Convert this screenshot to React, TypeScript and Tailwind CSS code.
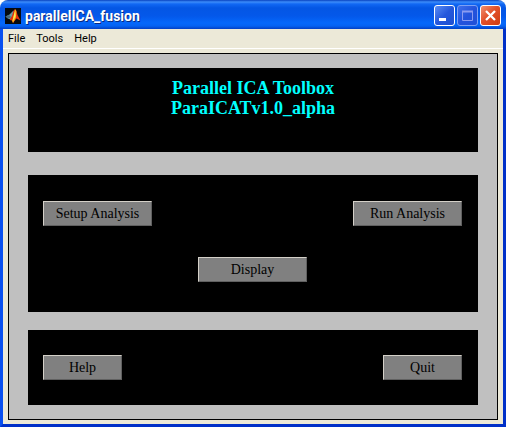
import type { ReactNode } from 'react';

function MatlabIcon() {
  return (
    <svg viewBox="0 0 16 16" className="size-4 shrink-0" aria-hidden="true">
      <rect width="16" height="16" fill="#050a10" />
      <path d="M0.500 8.500 L4.500 6.500 L8.500 2.500 L9 4 L8 8 L5.500 11 L3.500 11 Z" fill="#6b9aa0" />
      <path d="M0.500 8.500 L4 7 L6 9 L3.500 11 Z" fill="#48687a" />
      <path d="M4.500 12 L7 8 L8.500 3 L10 1 L11.500 3 L12.500 7 L15.500 12.500 L11.500 10.500 L8 15 L7 12.500 Z" fill="#e8300c" />
      <path d="M10 1 L11.300 3 L11 9.500 L8 15 L7 12.500 L9 8 Z" fill="#f8b01c" />
      <path d="M10 3 L10.500 8 L8 13 L8.500 8 Z" fill="#ffee50" />
    </svg>
  );
}

function CaptionButton({ label, tone, children }: { label: string; tone: string; children: ReactNode }) {
  return (
    <button type="button" aria-label={label} className={`size-[21px] rounded-[3px] border ${tone}`}>
      <svg viewBox="0 0 19 19" className="size-full" aria-hidden="true">
        {children}
      </svg>
    </button>
  );
}

function TitleBar() {
  return (
    <header className="flex h-[29px] items-center justify-between bg-[linear-gradient(180deg,#0842c0_0px,#3c8cfa_2px,#1168f4_4px,#0456e4_8px,#0458ea_16px,#0568fb_23px,#0562f2_26px,#0340c4_29px)] pt-[2px] pr-[5px] pl-[5px]">
      <div className="flex items-center gap-1">
        <MatlabIcon />
        <h1 className="font-['Roboto',sans-serif] text-[14px] leading-4 font-bold text-white [text-shadow:1px_1px_0_#0a2a80]">
          parallelICA_fusion
        </h1>
      </div>
      <div className="flex gap-[2px]">
        <CaptionButton label="Minimize" tone="border-white bg-[linear-gradient(135deg,#5b8df4,#2558dc_50%,#1e50d0)]">
          <rect x="4" y="12" width="7" height="3" fill="#fff" />
        </CaptionButton>
        <CaptionButton label="Maximize" tone="border-[#7da0f4] bg-[linear-gradient(135deg,#3f70ec,#2453dc_50%,#2050d8)]">
          <path d="M4.500 5.500 H14.500 V14.500 H4.500 Z M4 5 H15 M4 6 H15" fill="none" stroke="#8c9cf0" />
        </CaptionButton>
        <CaptionButton label="Close" tone="border-white bg-[linear-gradient(135deg,#f09070,#e2512a_45%,#d03c10)]">
          <path d="M5 5 L14 14 M14 5 L5 14" fill="none" stroke="#fff" strokeWidth="2.300" />
        </CaptionButton>
      </div>
    </header>
  );
}

function MenuBar() {
  return (
    <nav className="flex h-5 items-center gap-[11px] border-b border-white px-[5px] font-['Roboto',sans-serif] text-[11px] leading-4 text-black">
      {['File', 'Tools', 'Help'].map((item) => (
        <button key={item} type="button">
          {item}
        </button>
      ))}
    </nav>
  );
}

function PushButton({ children, width = 'w-[109px]' }: { children: ReactNode; width?: string }) {
  return (
    <button
      type="button"
      className={`${width} h-[25px] border border-t-[#d4d0c8] border-r-[#606060] border-b-[#606060] border-l-[#d4d0c8] bg-[#808080] text-[14px] leading-5 text-black`}
    >
      {children}
    </button>
  );
}

export default function App() {
  return (
    <div className="bg-white">
      <div className="overflow-hidden rounded-t-lg bg-[#ece9d8]">
        <TitleBar />
        <div className="border-x-[3px] border-b-[3px] border-t-0 border-r-[#0030c8] border-b-[#0030c8] border-l-[#0a50f0]">
          <MenuBar />
          <main className="px-[5px] py-1 font-['Liberation_Serif',serif]">
            <div className="border border-black bg-[#c0c0c0] px-[19px] py-[14px]">
              <section className="mb-[23px] bg-black pt-[10px] pb-[34px] text-center text-[18px] leading-5 font-bold text-[#00ffff]">
                <h2>Parallel ICA Toolbox</h2>
                <p>ParaICATv1.0_alpha</p>
              </section>
              <section className="mb-[18px] flex flex-col gap-[31px] bg-black pt-[26px] pr-4 pb-[30px] pl-[15px]">
                <div className="flex justify-between">
                  <PushButton>Setup Analysis</PushButton>
                  <PushButton>Run Analysis</PushButton>
                </div>
                <div className="flex justify-center">
                  <PushButton>Display</PushButton>
                </div>
              </section>
              <section className="flex justify-between bg-black py-[25px] pr-4 pl-[15px]">
                <PushButton width="w-[79px]">Help</PushButton>
                <PushButton width="w-[79px]">Quit</PushButton>
              </section>
            </div>
          </main>
        </div>
      </div>
    </div>
  );
}
